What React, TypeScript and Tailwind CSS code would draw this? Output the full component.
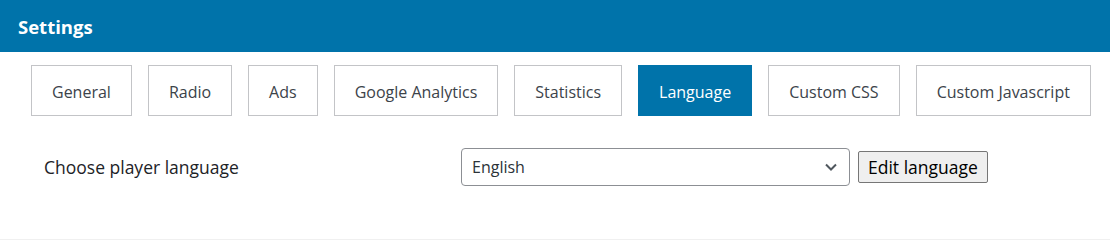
const tabs = ['General', 'Radio', 'Ads', 'Google Analytics', 'Statistics', 'Language', 'Custom CSS', 'Custom Javascript'];

export default function App() {
  return (
    <div className="w-[1110px] h-[240px] bg-white border-b border-[#f0f0f0] font-['Open_Sans',sans-serif]">
      <div className="h-[52px] bg-[#0073aa] flex items-center pl-[18px] pt-[1px]">
        <h1 className="text-white text-[18.5px] font-bold">Settings</h1>
      </div>
      <div className="flex gap-4 pl-[31px] pt-[13px]">
        {tabs.map((t) => (
          <div
            key={t}
            className={
              t === 'Language'
                ? 'h-[51px] px-[20px] pt-[2px] flex items-center text-[16px] bg-[#0073aa] text-white border border-[#0073aa]'
                : 'h-[51px] px-[20px] pt-[2px] flex items-center text-[16px] text-[#3c434a] border border-[#c3c4c7]'
            }
          >
            {t}
          </div>
        ))}
      </div>
      <div className="flex items-center pl-[44px] pt-[32px]">
        <div className="w-[417px] text-[17.5px] text-[#1d2327]">Choose player language</div>
        <div className="w-[389px] h-[38px] border border-[#8c8f94] rounded-[4px] flex items-center justify-between pl-[10px] pr-[11px] text-[16px] text-[#2c3338]">
          <span>English</span>
          <svg width="14" height="14" viewBox="0 0 14 14" fill="none">
            <path d="M2 4.5l5 5 5-5" stroke="#50575e" strokeWidth="2" />
          </svg>
        </div>
        <button className="ml-[8px] h-[32px] px-[9px] bg-[#efefef] border border-[#767676] rounded-[2px] text-[17.5px] text-black">
          Edit language
        </button>
      </div>
    </div>
  );
}
